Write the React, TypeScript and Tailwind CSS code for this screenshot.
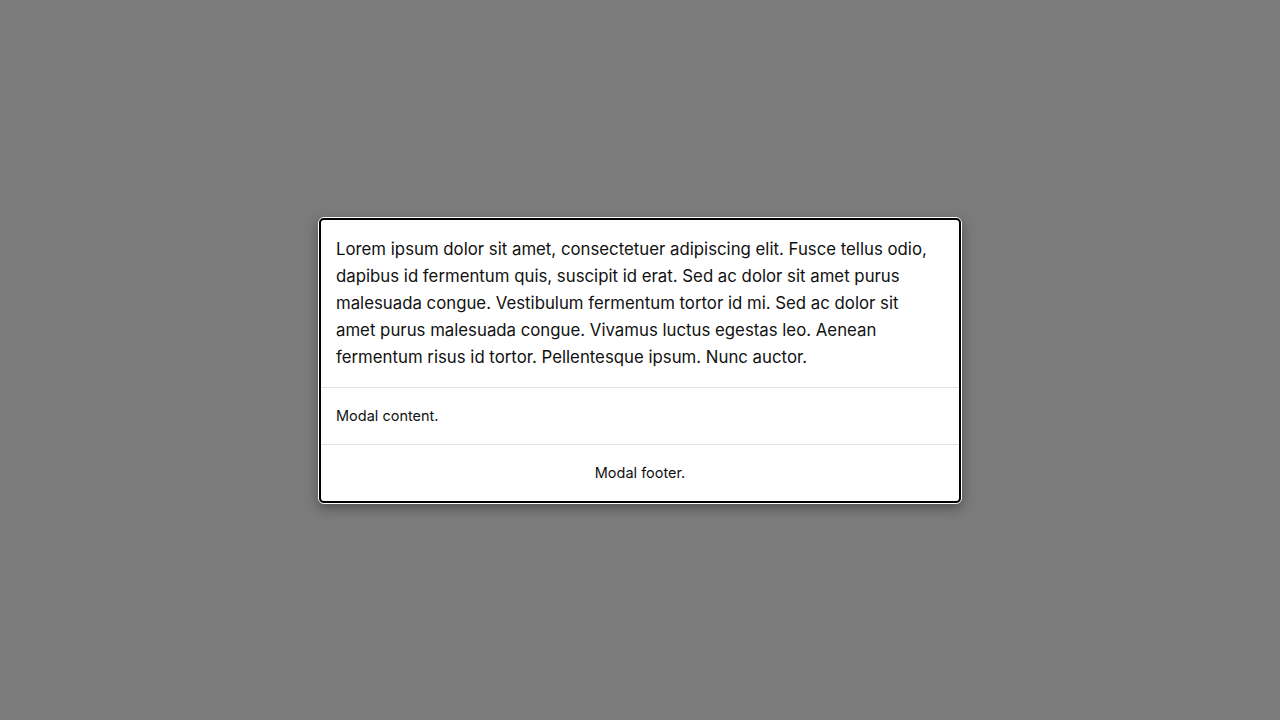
export default function App() {
  return (
    <div
      className="flex h-screen w-full items-center justify-center bg-[#7b7b7b]"
      style={{ fontFamily: "Inter, 'Liberation Sans', sans-serif" }}
    >
      {/* dialog: white ring + black focus outline */}
      <div className="w-[644px] rounded-[6px] border border-white shadow-[0_4px_12px_rgba(0,0,0,0.35)]">
        <div className="overflow-hidden rounded-[5px] border-2 border-black bg-white text-[#111]">
          <div className="py-4 pl-[15px] pr-6 text-[16.8px] leading-[27px]">
            Lorem ipsum dolor sit amet, consectetuer adipiscing elit. Fusce tellus odio, dapibus id
            fermentum quis, suscipit id erat. Sed ac dolor sit amet purus malesuada congue.
            Vestibulum fermentum tortor id mi. Sed ac dolor sit amet purus malesuada congue.
            Vivamus luctus egestas leo. Aenean fermentum risus id tortor. Pellentesque ipsum. Nunc
            auctor.
          </div>
          <div className="border-t border-[#e3e3e3] px-[15px] py-4 text-[14.5px] leading-6">
            Modal content.
          </div>
          <div className="border-t border-[#e3e3e3] px-[15px] py-4 text-center text-[14.5px] leading-6">
            Modal footer.
          </div>
        </div>
      </div>
    </div>
  );
}
